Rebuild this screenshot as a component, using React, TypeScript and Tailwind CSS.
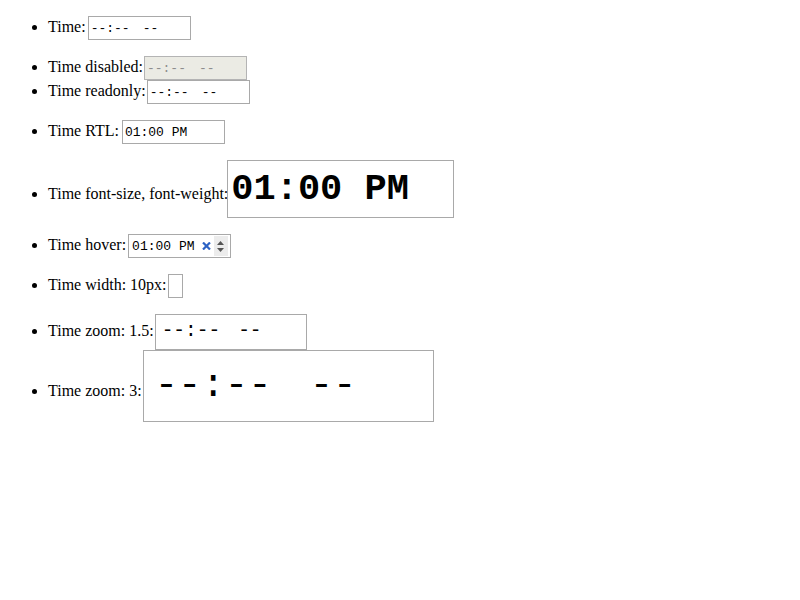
const mono = "font-['Liberation_Mono',monospace]";

function Placeholder({ gap }: { gap: string }) {
  return (
    <span className="whitespace-pre">
      --:--<span className={gap}>--</span>
    </span>
  );
}

export default function App() {
  return (
    <div className="min-h-[600px] bg-white pt-4 font-['Liberation_Serif',serif] text-[16px] leading-[normal] text-black">
      <div className="flex flex-col gap-4">
        <ul className="list-disc pl-12">
          <li>
            Time:
            <span className={`ml-[2px] inline-flex h-[24px] w-[103px] items-center border border-[#a9a9a9] pl-[2px] text-[13px] leading-none align-baseline ${mono}`}>
              <Placeholder gap="ml-[13px]" />
            </span>
          </li>
        </ul>

        <ul className="list-disc pl-12">
          <li>
            Time disabled:
            <span className={`ml-[1px] inline-flex h-[24px] w-[103px] items-center border border-[#b4b4b4] bg-[#ebebe4] pl-[2px] text-[13px] leading-none text-[#8d8d8d] align-baseline ${mono}`}>
              <Placeholder gap="ml-[13px]" />
            </span>
          </li>
          <li>
            Time readonly:
            <span className={`ml-[1px] inline-flex h-[24px] w-[103px] items-center border border-[#a9a9a9] pl-[2px] text-[13px] leading-none align-baseline ${mono}`}>
              <Placeholder gap="ml-[13px]" />
            </span>
          </li>
        </ul>

        <ul className="list-disc pl-12">
          <li>
            Time RTL:
            <span className={`ml-[3px] inline-flex h-[24px] w-[103px] items-center border border-[#a9a9a9] pl-[2px] text-[13px] leading-none align-baseline ${mono}`}>
              01:00 PM
            </span>
          </li>
        </ul>

        <ul className="list-disc pl-12">
          <li>
            Time font-size, font-weight:
            <span className={`ml-[-1px] inline-flex h-[58px] w-[227px] items-center border border-[#a9a9a9] pl-[3px] text-[37px] font-bold leading-none align-baseline ${mono}`}>
              01:00 PM
            </span>
          </li>
        </ul>

        <ul className="list-disc pl-12">
          <li>
            Time hover:
            <span className={`ml-[2px] inline-flex h-[24px] w-[103px] items-center border border-[#a9a9a9] pl-[3px] text-[13px] leading-none align-baseline ${mono}`}>
              <span>01:00 PM</span>
              <svg className="ml-[7px]" width="9" height="8" viewBox="0 0 9 8">
                <path d="M1 0.5 L8 7.5 M8 0.5 L1 7.5" stroke="#2c62c4" strokeWidth="2.2" />
              </svg>
              <span className="ml-[3px] flex h-[20px] w-[14px] flex-col items-center justify-center gap-[3px] bg-[#ececec]">
                <svg width="7" height="4" viewBox="0 0 7 4">
                  <path d="M0 4 L3.5 0 L7 4 Z" fill="#555" />
                </svg>
                <svg width="7" height="4" viewBox="0 0 7 4">
                  <path d="M0 0 L3.5 4 L7 0 Z" fill="#555" />
                </svg>
              </span>
            </span>
          </li>
        </ul>

        <ul className="list-disc pl-12">
          <li>
            Time width: 10px:
            <span className={`ml-[1px] inline-flex h-[24px] w-[15px] items-center border border-[#a9a9a9] text-[13px] leading-none align-baseline ${mono}`}>
              <span className="invisible">-</span>
            </span>
          </li>
        </ul>

        <ul className="list-disc pl-12">
          <li>
            Time zoom: 1.5:
            <span className={`ml-[1px] inline-flex h-[36px] w-[152px] items-center border border-[#a9a9a9] pl-[6px] text-[19.5px] leading-none align-baseline ${mono}`}>
              <Placeholder gap="ml-[18px]" />
            </span>
          </li>
          <li>
            Time zoom: 3:
            <span className={`ml-[1px] inline-flex h-[72px] w-[291px] items-center border border-[#a9a9a9] pl-[11px] text-[39px] leading-none align-baseline ${mono}`}>
              <Placeholder gap="ml-[38px]" />
            </span>
          </li>
        </ul>
      </div>
    </div>
  );
}
